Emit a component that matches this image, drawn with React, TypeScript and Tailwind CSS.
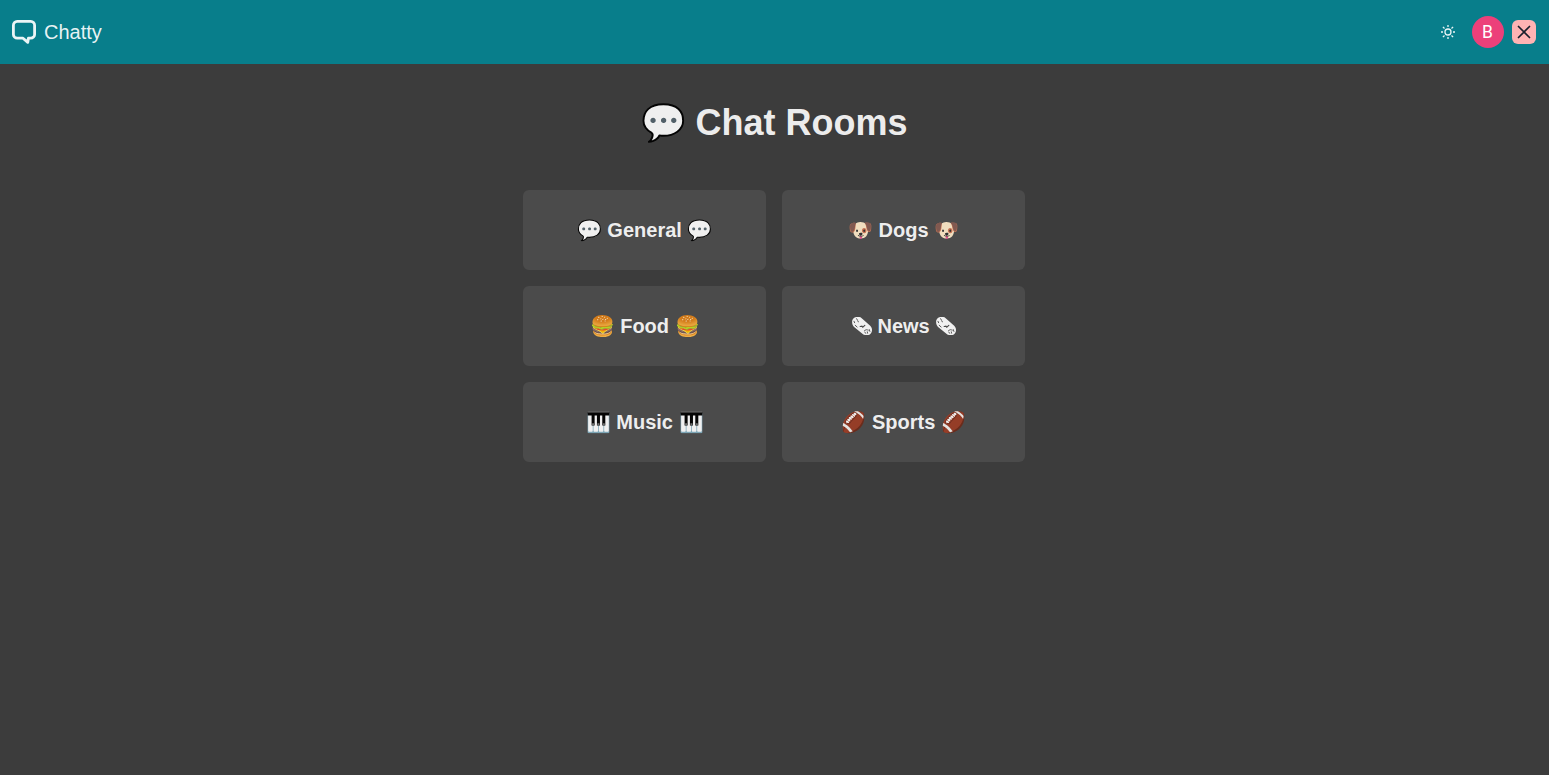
const rooms = [
  { name: "General", emoji: "💬" },
  { name: "Dogs", emoji: "🐶" },
  { name: "Food", emoji: "🍔" },
  { name: "News", emoji: null },
  { name: "Music", emoji: "🎹" },
  { name: "Sports", emoji: "🏈" },
];

function ChatIcon() {
  return (
    <svg className="size-6" viewBox="0 0 24 24" fill="none" stroke="currentColor" strokeWidth="2.8" strokeLinejoin="round" strokeLinecap="round">
      <path d="M5.2 1.4h13.6a3.8 3.8 0 0 1 3.8 3.8v9.2a3.8 3.8 0 0 1-3.8 3.8h-2.4l-.6 4.2-4.8-4.2H5.2a3.8 3.8 0 0 1-3.8-3.8V5.2a3.8 3.8 0 0 1 3.8-3.8z" />
    </svg>
  );
}

function SunIcon() {
  return (
    <svg className="size-4" viewBox="0 0 16 16" fill="none" stroke="currentColor" strokeWidth="1.3">
      <circle cx="8" cy="8" r="3" />
      <path d="M8 1v2M8 13v2M1 8h2M13 8h2M2.900 2.900l1.600 1.600M11.500 11.500l1.600 1.600M2.900 13.100l1.600-1.600M11.500 4.500l1.600-1.600" />
    </svg>
  );
}

function CloseIcon() {
  return (
    <svg className="size-6" viewBox="0 0 24 24" fill="none" stroke="currentColor" strokeWidth="1.7" strokeLinecap="round">
      <path d="M6.5 6.5l11 11M17.5 6.5l-11 11" />
    </svg>
  );
}

function NewspaperIcon() {
  return (
    <svg className="h-[18px] w-[21px]" viewBox="0 0 21 18" fill="none">
      <path d="M1.1 4.9C1.1 2.200 3 0 6 0h2.200c1 .1 1.700.5 2.500 1.200l8.500 7.600c1.200 1.100 1.800 2.500 1.800 4.200 0 2.900-1.800 5-4.500 5h-2.300c-1 0-1.900-.4-2.800-1.200L3.100 10C1.800 8.700 1.100 6.900 1.100 4.900z" fill="currentColor" />
      <g className="stroke-[#4b4b4b]" strokeWidth=".9" strokeLinecap="round">
        <path d="M5.600 1.700l.9 1.500M3 4.300l.6 1.400M4.200 8.300l1.900 1.700M6.600 4.100l1 .7" />
        <path d="M9.200 9.500l1.700-.4.9 1 2-1.700" strokeWidth="1.200" />
        <path d="M13.500 13.700c.8-1.500 2.900-1.200 3.700-.4M14.600 16.300l-.8-1.300M16.300 14.800l.3 1.400M18.200 12.500l.7 1.900" />
      </g>
    </svg>
  );
}

export default function App() {
  return (
    <div className="flex min-h-screen flex-col bg-[#3c3c3c] font-['Liberation_Sans',sans-serif] text-white/92">
      <header className="flex h-16 items-center justify-between bg-[#087e8b] pl-3 pr-[13px]">
        <div className="flex items-center gap-2">
          <ChatIcon />
          <span className="text-xl">Chatty</span>
        </div>
        <div className="flex items-center">
          <button className="mr-4" aria-label="Toggle theme">
            <SunIcon />
          </button>
          <div className="mr-2 flex size-8 items-center justify-center rounded-full bg-[#ec407a] pr-px font-[Roboto,sans-serif] text-[17.5px] text-white">B</div>
          <button className="flex size-6 items-center justify-center rounded-md bg-[#ffb3b3] text-[#1a202c]" aria-label="Close">
            <CloseIcon />
          </button>
        </div>
      </header>
      <main className="flex flex-col items-center pr-[0.75px] pt-8">
        <h1 className="text-4xl/[54px] font-bold">💬 Chat Rooms</h1>
        <div className="mt-10 grid grid-cols-[243px_243px] gap-4">
          {rooms.map(({ name, emoji }) => (
            <button key={name} className="flex h-20 items-center justify-center rounded-md bg-[#4b4b4b] text-xl font-bold">
              {emoji ? (
                `${emoji} ${name} ${emoji}`
              ) : (
                <span className="flex items-center gap-[5.5px]">
                  <NewspaperIcon />
                  {name}
                  <NewspaperIcon />
                </span>
              )}
            </button>
          ))}
        </div>
      </main>
    </div>
  );
}
